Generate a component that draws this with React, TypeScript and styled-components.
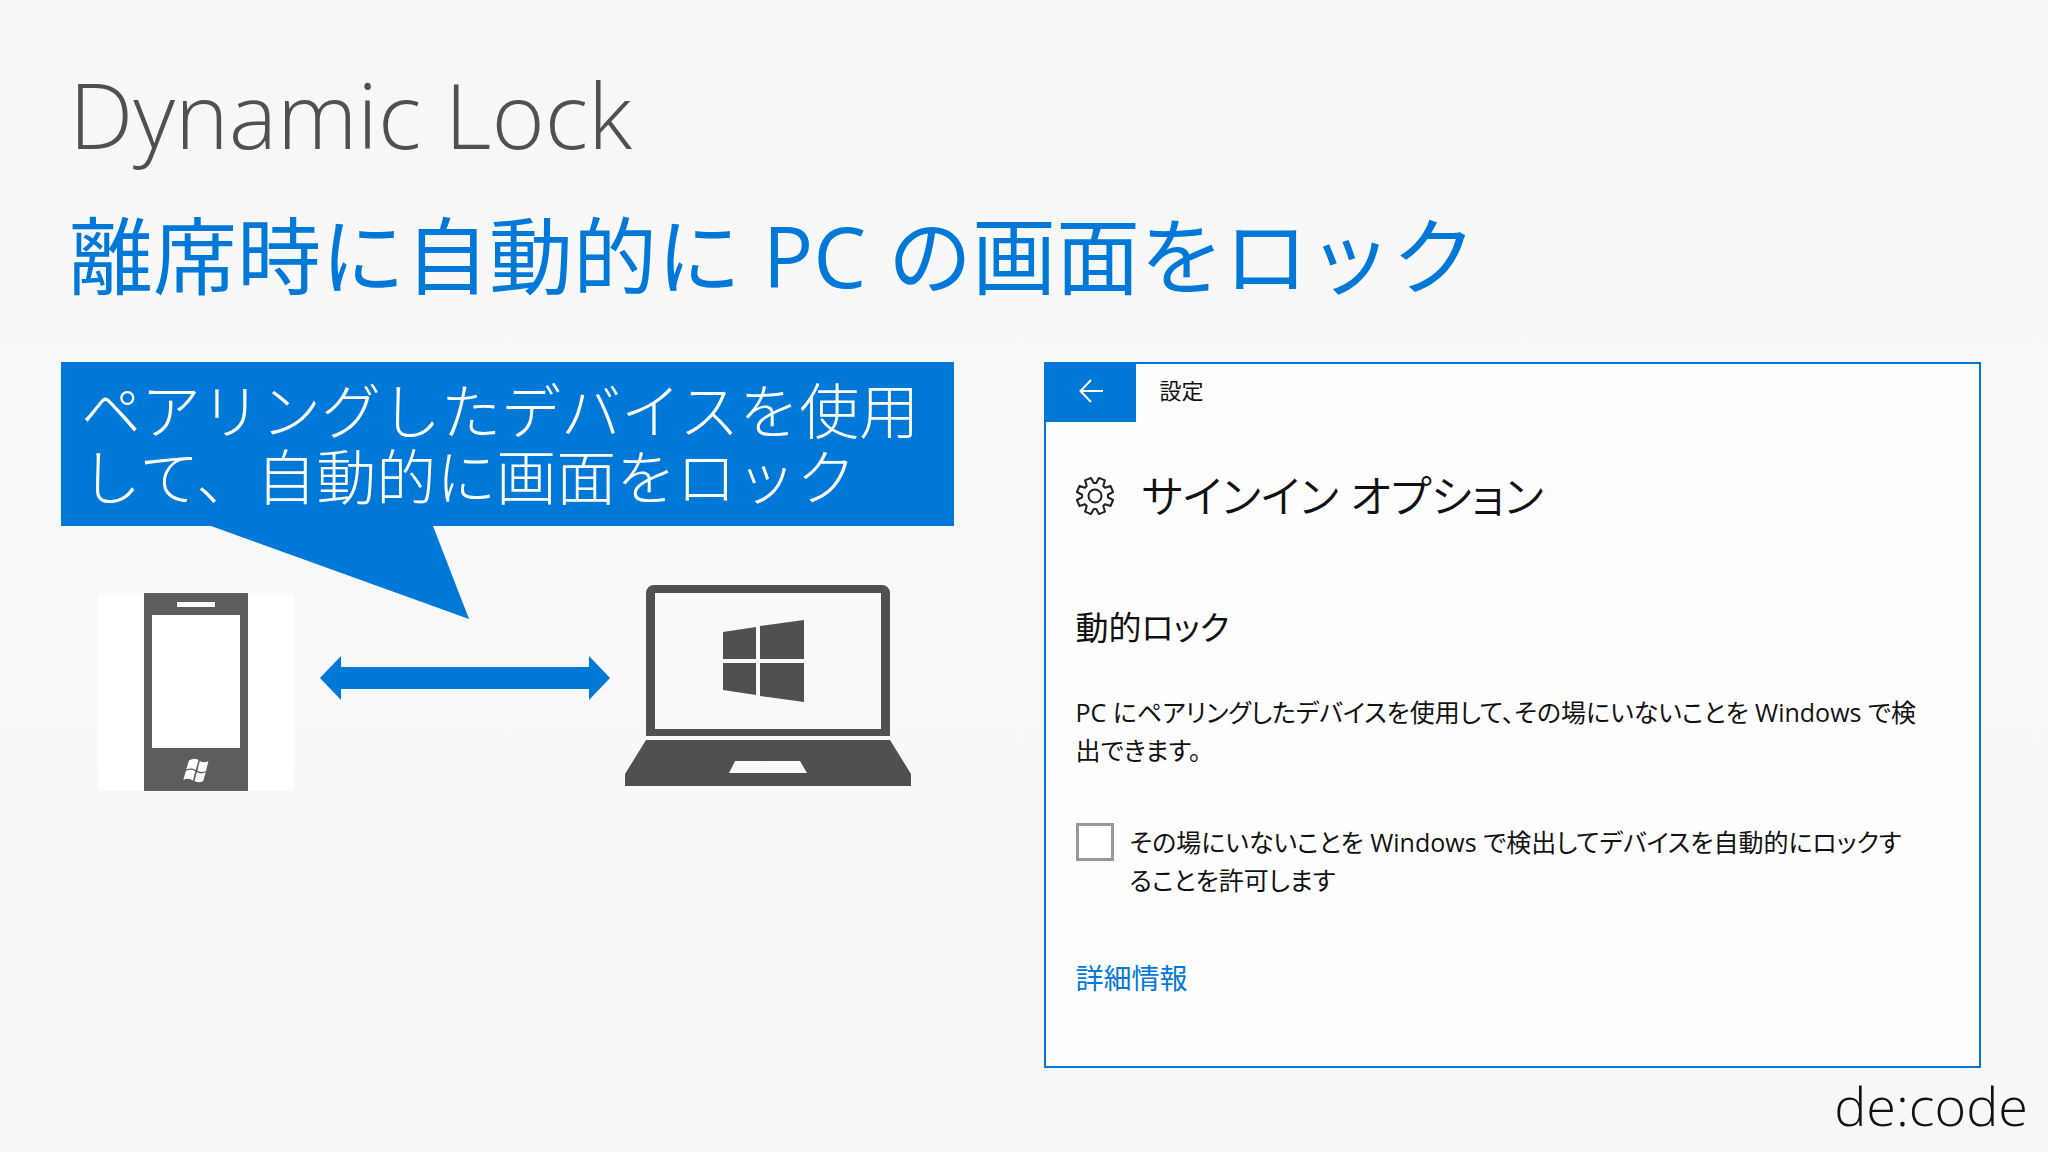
import React, { useState } from "react";
import styled, { createGlobalStyle } from "styled-components";

const BLUE = "#0078d7";
const LATIN = `"Open Sans", "Noto Sans", "Noto Sans CJK JP", sans-serif`;

const GlobalStyle = createGlobalStyle`
  *, *::before, *::after { box-sizing: border-box; }
  body {
    margin: 0;
    background: #f8f8f9;
    font-family: ${LATIN};
    color: #111;
  }
`;

const Slide = styled.div`
  min-height: 100vh;
  display: flex;
  flex-direction: column;
  background: linear-gradient(#f7f7f7, #f9f8fb 45%, #f7f6f8);
`;

const Header = styled.header`
  padding: 48px 69px 0;
`;

const Title = styled.h1`
  margin: 0;
  font-size: 91px;
  line-height: 132px;
  font-weight: 300;
  color: #505050;
`;

const Subtitle = styled.h2`
  margin: 10px 0 0;
  font-size: 84px;
  line-height: 132px;
  font-weight: 400;
  color: ${BLUE};
`;

const Columns = styled.main`
  display: grid;
  grid-template-columns: minmax(0, 893fr) minmax(0, 938fr);
  gap: 90px;
  align-items: start;
  padding: 40px 67px 0 61px;
`;

const Left = styled.section`
  display: flex;
  flex-direction: column;
`;

const Callout = styled.div`
  position: relative;
  padding: 13px 20px 19px;
  background: ${BLUE};
`;

const CalloutText = styled.p`
  margin: 0;
  font-size: 60px;
  line-height: 66px;
  font-weight: 300;
  font-family: "Noto Sans CJK JP", sans-serif;
  color: #fff;
  white-space: nowrap;
`;

const Tail = styled.svg`
  position: absolute;
  top: 100%;
  left: 150px;
  width: 260px;
  height: 94px;
  display: block;
`;

const Diagram = styled.div`
  display: flex;
  align-items: flex-start;
  padding: 59px 43px 0 37px;
`;

const PhoneTile = styled.div`
  display: flex;
  justify-content: center;
  width: 196px;
  margin-top: 8px;
  background: #fff;
  border-radius: 4px;
`;

const LinkArrow = styled.div`
  flex: 1;
  display: flex;
  justify-content: center;
  padding-left: 12px;
  margin-top: 71px;
`;

const Drawing = styled.svg`
  display: block;
`;

const Panel = styled.section`
  border: 2px solid ${BLUE};
  background: #fefefe;
  min-height: 706px;
`;

const PanelBar = styled.div`
  display: flex;
  align-items: flex-start;
  gap: 24px;
  height: 58px;
  font-size: 22px;
  line-height: 52px;
`;

const BackButton = styled.button`
  display: flex;
  align-items: center;
  justify-content: center;
  align-self: stretch;
  width: 90px;
  padding: 0 0 4px;
  border: 0;
  background: ${BLUE};
  color: #fff;
`;

const PanelBody = styled.div`
  padding: 40px 40px 0 30px;
  font-feature-settings: "palt";
`;

const PanelTitle = styled.h3`
  display: flex;
  align-items: center;
  gap: 28px;
  margin: 0;
  font-size: 44px;
  line-height: 68px;
  font-weight: 350;
`;

const SectionTitle = styled.h4`
  margin: 73px 0 0;
  font-size: 33px;
  line-height: 50px;
  font-weight: 400;
`;

const Text = styled.p`
  margin: 40px 0 0;
  font-size: 25px;
  line-height: 38px;
  white-space: nowrap;
`;

const Option = styled.label`
  display: flex;
  align-items: flex-start;
  gap: 16px;
  margin-top: 54px;
  font-size: 25px;
  line-height: 38px;
  white-space: nowrap;
`;

const CheckBox = styled.input`
  appearance: none;
  flex: none;
  width: 38px;
  height: 38px;
  margin: 0;
  border: 3px solid #999;
  background: #fff;

  &:checked {
    background: ${BLUE};
    border-color: ${BLUE};
  }
`;

const MoreLink = styled.a`
  display: inline-block;
  margin-top: 60px;
  font-size: 28px;
  line-height: 38px;
  color: ${BLUE};
  text-decoration: none;
`;

const Footer = styled.footer`
  display: flex;
  justify-content: flex-end;
  padding: 0 20px;
  font-size: 54px;
  line-height: 74px;
  font-weight: 300;
`;

const Phone = () => (
  <Drawing width="104" height="198" viewBox="0 0 104 198" role="img" aria-label="Phone">
    <path fill="#5d5d5d" d="M0 0h104v198H0z" />
    <path fill="#fff" d="M33 9h38v5H33zM8 22h88v133H8z" />
    <path
      fill="#fff"
      d="M45 167.500q5-3 9.500 -.6L51.800 177q-4.500-2.700-9.700-.4zM55.800 168q4.500 2.500 8.600 .3L62 178q-4.300 2-8.600-.3zM41.800 178q5-2.600 9.500 .2L49 187.500q-4.600-3-9.700-.6zM52.900 179q4.400 2.600 8.800 .3L59.200 188q-4.400 2.400-8.700-.1z"
    />
  </Drawing>
);

const DoubleArrow = () => (
  <Drawing width="290" height="44" viewBox="0 0 290 44" aria-hidden="true">
    <path fill={BLUE} d="M0 22 21 0v11h248V0l21 22-21 22V33H21v11z" />
  </Drawing>
);

const Laptop = () => (
  <Drawing width="286" height="201" viewBox="0 0 286 201" role="img" aria-label="Laptop">
    <g fill="#514f52">
      <path
        fillRule="evenodd"
        d="M21 151V8a8 8 0 0 1 8-8h228a8 8 0 0 1 8 8v143zM30 8v136h226V8z"
      />
      <path
        fillRule="evenodd"
        d="M21 155h244l21 34v12H0v-12zM110 176l-6 12h78l-7-12z"
      />
      <path d="M98 47l33-5v32H98zM135 41l44-6v39h-44zM98 78h33v32l-33-5zM135 78h44v39l-44-6z" />
    </g>
  </Drawing>
);

const BackArrow = () => (
  <Drawing width="24" height="24" viewBox="0 0 24 24" fill="none" stroke="currentColor" strokeWidth="2" aria-hidden="true">
    <path d="M24 12H2M12 1 1.500 12 12 23" />
  </Drawing>
);

const TEETH = 8;

/** Outline of a cog: each tooth is a flat tip joined to its neighbours by a notch. */
const gearPath = () => {
  const at = (radius: number, degrees: number) => {
    const a = (degrees * Math.PI) / 180;
    return `${(20 + radius * Math.cos(a)).toFixed(2)} ${(20 + radius * Math.sin(a)).toFixed(2)}`;
  };
  const points: string[] = [];
  for (let i = 0; i < TEETH; i++) {
    const c = (i * 360) / TEETH + 360 / TEETH / 2;
    points.push(at(13, c - 17), at(18.5, c - 10), at(18.5, c + 10), at(13, c + 17));
  }
  return `M${points.join("L")}Z`;
};

const Gear = () => (
  <Drawing width="38" height="40" viewBox="1 0 38 40" fill="none" stroke="#222" strokeWidth="2" strokeLinejoin="round" aria-hidden="true">
    <path d={gearPath()} />
    <circle cx="20" cy="20" r="6.500" />
  </Drawing>
);

export default function App() {
  const [allowed, setAllowed] = useState(false);

  return (
    <Slide lang="ja">
      <GlobalStyle />
      <Header>
        <Title>Dynamic Lock</Title>
        <Subtitle>離席時に自動的に PC の画面をロック</Subtitle>
      </Header>
      <Columns>
        <Left>
          <Callout>
            <CalloutText>
              ペアリングしたデバイスを使用
              <br />
              して、自動的に画面をロック
            </CalloutText>
            <Tail viewBox="0 0 260 94" aria-hidden="true">
              <path fill={BLUE} d="M0 0h222l36 93z" />
            </Tail>
          </Callout>
          <Diagram>
            <PhoneTile>
              <Phone />
            </PhoneTile>
            <LinkArrow>
              <DoubleArrow />
            </LinkArrow>
            <Laptop />
          </Diagram>
        </Left>
        <Panel>
          <PanelBar>
            <BackButton type="button" aria-label="戻る">
              <BackArrow />
            </BackButton>
            <span>設定</span>
          </PanelBar>
          <PanelBody>
            <PanelTitle>
              <Gear />
              サインイン オプション
            </PanelTitle>
            <SectionTitle>動的ロック</SectionTitle>
            <Text>
              PC にペアリングしたデバイスを使用して、その場にいないことを Windows で検
              <br />
              出できます。
            </Text>
            <Option htmlFor="dynamic-lock">
              <CheckBox
                id="dynamic-lock"
                type="checkbox"
                checked={allowed}
                onChange={(event) => setAllowed(event.target.checked)}
              />
              <span>
                その場にいないことを Windows で検出してデバイスを自動的にロックす
                <br />
                ることを許可します
              </span>
            </Option>
            <MoreLink href="#details">詳細情報</MoreLink>
          </PanelBody>
        </Panel>
      </Columns>
      <Footer>de:code</Footer>
    </Slide>
  );
}
